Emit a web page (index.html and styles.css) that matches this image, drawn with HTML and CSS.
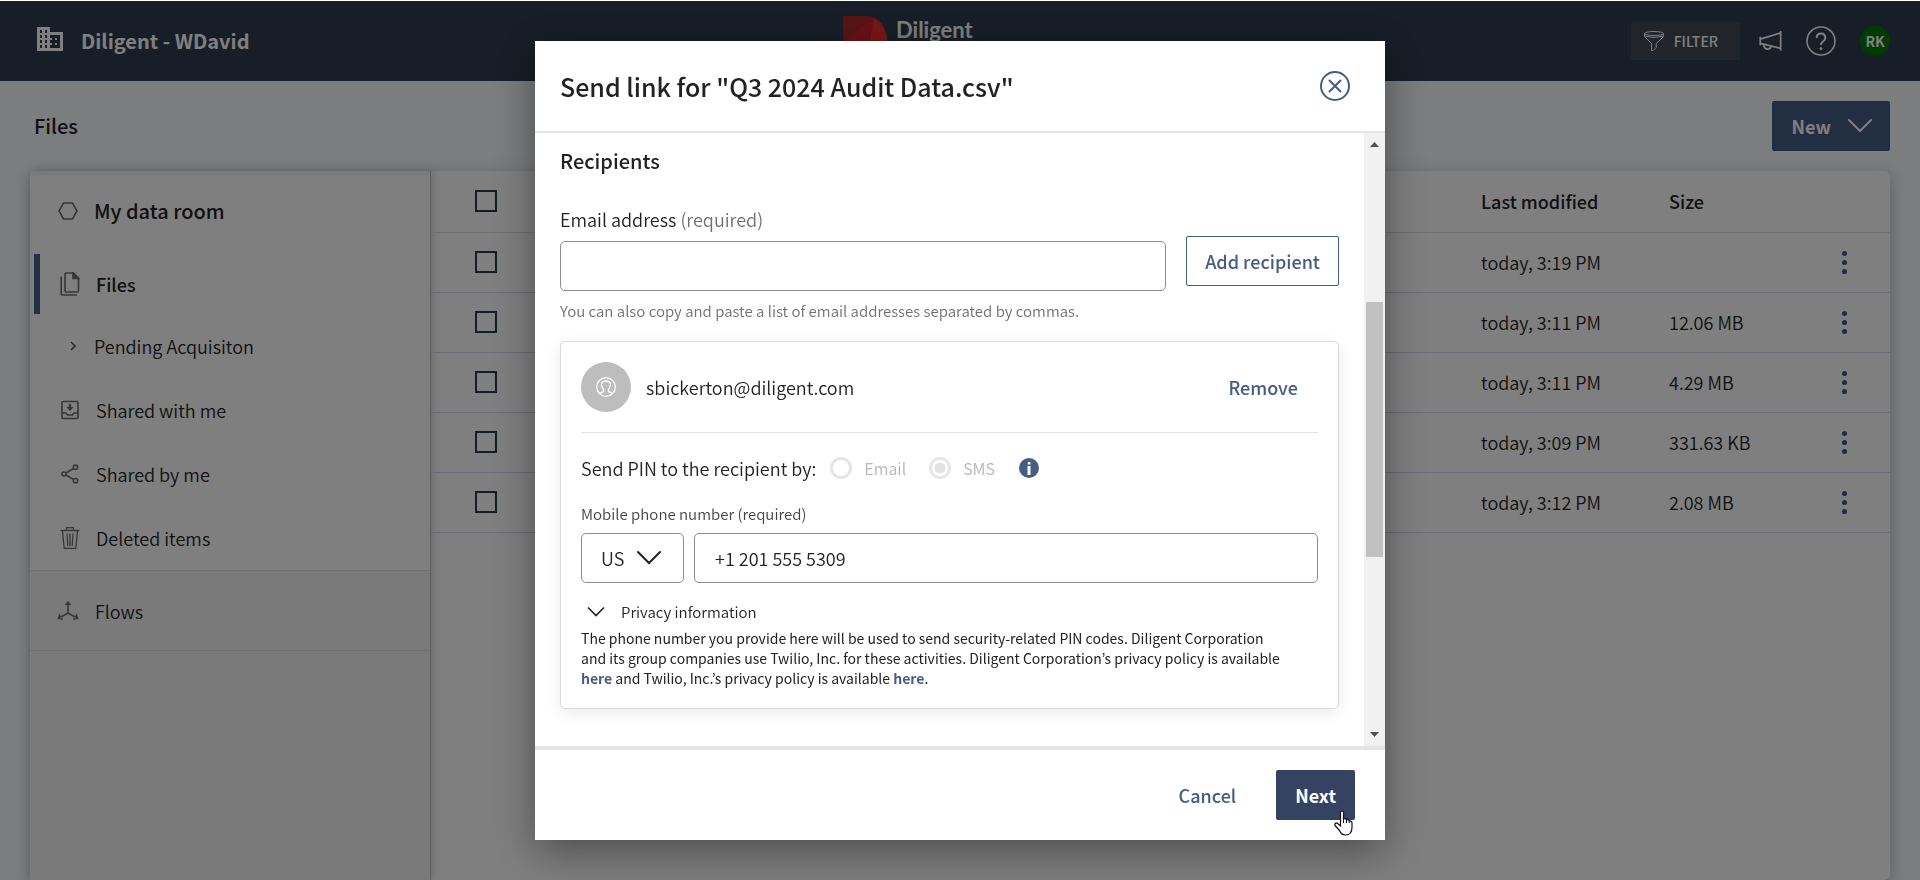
FILE: index.html
```html
<!DOCTYPE html>
<html lang="en">
<head>
    <meta charset="UTF-8">
    <meta name="viewport" content="width=device-width, initial-scale=1.0">
    <title>Files - Diligent</title>
    <link rel="stylesheet" href="styles.css">
</head>
<body>
    <header class="topbar">
        <div class="org">
            <svg class="org-icon" width="26" height="24" viewBox="0 0 26 24">
                <path fill="#fff" fill-rule="evenodd" d="M0 0h13v5h13v19H0zM3 3v3h2V3zM8 3v3h2V3zM3 8v3h2V8zM8 8v3h2V8zM3 13v3h2v-3zM8 13v3h2v-3zM3 18v3h2v-3zM8 18v3h2v-3zM13 8v3h2v2h-2v3h2v2h-2v3h10V8zM18 11h2v2h-2zM18 16h2v2h-2z"/>
            </svg>
            <span class="org-name">Diligent - WDavid</span>
        </div>
        <div class="brand">
            <svg width="44" height="50" viewBox="0 0 44 50">
                <path fill="#d3222a" d="M0 0h22c14 0 22 11 22 25S36 50 22 50H0z"/>
                <path fill="#af292e" d="M0 0h22q5 0 9 3L0 25z"/>
                <path fill="#ee312e" d="M31 3c8 4 13 12 13 22s-5 17-12 22l-5-22z"/>
            </svg>
            <span>Diligent</span>
        </div>
        <div class="tools">
            <button class="filter-btn" type="button">
                <svg width="20" height="20" viewBox="0 0 20 20" fill="none" stroke="#fff">
                    <ellipse cx="10" cy="2.5" rx="9.4" ry="2"/>
                    <path d="M.6 2.5v3.2l7 6.8v7l1.4.2 3.2-3.2v-4l7.2-6.8V2.5M.6 5q9.400 3 18.800 0"/>
                </svg>
                FILTER
            </button>
            <button class="icon-btn" type="button" aria-label="Announcements">
                <svg width="23" height="22" viewBox="0 0 24 22" fill="none" stroke="#fff" stroke-width="1.800">
                    <path d="M1.300 6.500v9M22.600.500v20.500M1.300 9L22.600 2.500M1.300 13.500l21.300 5.200M5 14.500q.500 5 4 5 3 0 3.500-3"/>
                </svg>
            </button>
            <button class="icon-btn" type="button" aria-label="Help">
                <svg width="30" height="30" viewBox="0 0 30 30" fill="none" stroke="#fff" stroke-width="1.600">
                    <circle cx="15" cy="15" r="14"/>
                    <path stroke-width="2" d="M10.700 12q0-4.500 4.300-4.500T19.300 12c0 3.500-4.300 3-4.300 7"/>
                    <circle cx="15" cy="22.500" r="1.500" fill="#fff" stroke="none"/>
                </svg>
            </button>
            <span class="user">RK</span>
        </div>
    </header>

    <main class="page">
        <div class="page-head">
            <h1>Files</h1>
            <button class="new-btn" type="button">
                New
                <svg width="26" height="16" viewBox="0 0 26 16" fill="none" stroke="#fff" stroke-width="2" stroke-linecap="round"><path d="M2 2l11 11L24 2"/></svg>
            </button>
        </div>

        <div class="panel">
            <nav class="sidebar">
                <a class="side-title" href="#">
                    <svg width="20" height="20" viewBox="0 0 20 20" fill="none" stroke="#6f6f6f" stroke-width="1.600"><path d="M5.500 2h9L19 10l-4.500 8h-9L1 10z"/></svg>
                    My data room
                </a>
                <a class="active" href="#">
                    <svg width="20" height="24" viewBox="0 0 20 24" fill="none" stroke="#6f6f6f" stroke-width="1.600"><path d="M5 2q0-1 1-1h7.500L18.500 6v13q0 1-1 1H6q-1 0-1-1zM1.200 4.500V22q0 1 1 1H17"/><path fill="#6f6f6f" d="M13 1v5.500h5.500z"/></svg>
                    Files
                </a>
                <a class="sub" href="#">
                    <svg width="20" height="12" viewBox="0 0 20 12" fill="none" stroke="#555" stroke-width="1.600"><path d="M13 2l4 4-4 4"/></svg>
                    Pending Acquisiton
                </a>
                <a href="#">
                    <svg width="20" height="20" viewBox="0 0 20 20" fill="none" stroke="#6f6f6f" stroke-width="1.600"><rect x="2" y="1.500" width="16" height="17" rx="1"/><path d="M2 13h4l1.500 2h5l1.500-2h4"/><path fill="#6f6f6f" stroke="none" d="M8.800 4h2.400v3h2.300L10 11 6.500 7h2.300z"/></svg>
                    Shared with me
                </a>
                <a href="#">
                    <svg width="20" height="20" viewBox="0 0 20 20" fill="none" stroke="#6f6f6f" stroke-width="1.600"><circle cx="4" cy="10" r="2"/><circle cx="15.500" cy="3.300" r="2.200"/><circle cx="15.500" cy="16.700" r="2.200"/><path d="M6 9l7.500-4.500M6 11l7.500 4.500"/></svg>
                    Shared by me
                </a>
                <a href="#">
                    <svg width="20" height="24" viewBox="0 0 20 24" fill="none" stroke="#6f6f6f" stroke-width="1.300"><path d="M.5 4.500h19M6.500 4V1.700h7V4M2.500 5l1.700 17.300h11.600L17.500 5M7 7.500l.8 12.500M10 7.500V20M13 7.500L12.200 20"/></svg>
                    Deleted items
                </a>
                <a class="flows" href="#">
                    <svg width="22" height="20" viewBox="0 0 22 20" fill="none" stroke="#6f6f6f" stroke-width="1.600"><path d="M11 2v10M11 12l-9 5M11 12l9 5M8.500 4L11 1.200 13.500 4M3 13.300L1.500 17.500l4.500.8M19 13.300l1.500 4.200-4.500.8"/></svg>
                    Flows
                </a>
            </nav>

            <table class="files">
                <thead>
                    <tr>
                        <th class="col-check"><input type="checkbox" aria-label="Select all"></th>
                        <th></th>
                        <th class="col-date">Last modified</th>
                        <th class="col-size">Size</th>
                        <th class="col-menu"></th>
                    </tr>
                </thead>
                <tbody>
                    <tr>
                        <td><input type="checkbox" aria-label="Select row 1"></td>
                        <td></td>
                        <td>today, 3:19 PM</td>
                        <td></td>
                        <td><button class="dots" type="button" aria-label="More"><i></i><i></i><i></i></button></td>
                    </tr>
                    <tr>
                        <td><input type="checkbox" aria-label="Select row 2"></td>
                        <td></td>
                        <td>today, 3:11 PM</td>
                        <td>12.06 MB</td>
                        <td><button class="dots" type="button" aria-label="More"><i></i><i></i><i></i></button></td>
                    </tr>
                    <tr>
                        <td><input type="checkbox" aria-label="Select row 3"></td>
                        <td></td>
                        <td>today, 3:11 PM</td>
                        <td>4.29 MB</td>
                        <td><button class="dots" type="button" aria-label="More"><i></i><i></i><i></i></button></td>
                    </tr>
                    <tr>
                        <td><input type="checkbox" aria-label="Select row 4"></td>
                        <td></td>
                        <td>today, 3:09 PM</td>
                        <td>331.63 KB</td>
                        <td><button class="dots" type="button" aria-label="More"><i></i><i></i><i></i></button></td>
                    </tr>
                    <tr>
                        <td><input type="checkbox" aria-label="Select row 5"></td>
                        <td></td>
                        <td>today, 3:12 PM</td>
                        <td>2.08 MB</td>
                        <td><button class="dots" type="button" aria-label="More"><i></i><i></i><i></i></button></td>
                    </tr>
                </tbody>
            </table>
        </div>
    </main>

    <div class="overlay">
        <div class="modal" role="dialog" aria-labelledby="modalTitle">
            <div class="modal-head">
                <h2 id="modalTitle">Send link for "Q3 2024 Audit Data.csv"</h2>
                <button class="close-btn" type="button" aria-label="Close">
                    <svg width="30" height="30" viewBox="0 0 30 30" fill="none" stroke="#455d82" stroke-width="2"><circle cx="15" cy="15" r="14"/><path stroke-linecap="round" d="M9.500 9.500l11 11M20.500 9.500l-11 11"/></svg>
                </button>
            </div>

            <div class="modal-main">
                <form class="modal-body">
                    <h3>Recipients</h3>
                    <label class="email-label" for="email">Email address <span>(required)</span></label>
                    <div class="email-row">
                        <input class="field" type="email" id="email">
                        <button class="add-btn" type="button">Add recipient</button>
                    </div>
                    <p class="hint">You can also copy and paste a list of email addresses separated by commas.</p>

                    <section class="card">
                        <div class="person">
                            <span class="avatar">
                                <svg width="20" height="20" viewBox="0 0 20 20" fill="none" stroke="#fff" stroke-width="1.300"><circle cx="10" cy="10" r="9.300"/><path d="M3.500 16.300l4-1.800v-2Q5.500 10 5.500 7.500 5.800 4 10 4t4.500 3.500q0 2.500-2 5v2l4 1.800"/></svg>
                            </span>
                            <span class="address">sbickerton@diligent.com</span>
                            <button class="link-btn" type="button">Remove</button>
                        </div>

                        <div class="pin">
                            <span>Send PIN to the recipient by:</span>
                            <label><input type="radio" name="pin" disabled>Email</label>
                            <label><input type="radio" name="pin" checked disabled>SMS</label>
                            <svg width="20" height="20" viewBox="0 0 20 20"><circle cx="10" cy="10" r="10" fill="#455d82"/><path fill="#fff" d="M8.800 4h2.600v2.500H8.800zM8.500 8h3v9h-3z"/></svg>
                        </div>

                        <label class="phone-label" for="phone">Mobile phone number (required)</label>
                        <div class="phone-row">
                            <div class="country">
                                <select aria-label="Country"><option>US</option></select>
                                <svg width="26" height="16" viewBox="0 0 26 16" fill="none" stroke="#222" stroke-width="2" stroke-linecap="round"><path d="M2 2l11 11L24 2"/></svg>
                            </div>
                            <input class="field" type="tel" id="phone" value="+1 201 555 5309">
                        </div>

                        <details class="privacy" open>
                            <summary>
                                <svg width="18" height="12" viewBox="0 0 18 12" fill="none" stroke="#222" stroke-width="1.600"><path d="M1 1.500l8 8 8-8"/></svg>
                                Privacy information
                            </summary>
                            <p>The phone number you provide here will be used to send security-related PIN codes. Diligent Corporation and its group companies use Twilio, Inc. for these activities. Diligent Corporation’s privacy policy is available <a href="#">here</a> and Twilio, Inc.’s privacy policy is available <a href="#">here</a>.</p>
                        </details>
                    </section>
                </form>

                <div class="scrollbar">
                    <svg width="9" height="5" viewBox="0 0 9 5"><path fill="#505050" d="M0 5l4.500-5L9 5z"/></svg>
                    <div class="track"><div class="thumb"></div></div>
                    <svg width="9" height="5" viewBox="0 0 9 5"><path fill="#505050" d="M0 0l4.500 5L9 0z"/></svg>
                </div>
            </div>

            <div class="modal-foot">
                <button class="link-btn" type="button">Cancel</button>
                <button class="next-btn" type="button">
                    Next
                    <svg class="pointer" width="20" height="26" viewBox="0 0 20 26"><path fill="#fff" stroke="#111" stroke-width="1.200" stroke-linejoin="round" d="M6.500 16V2.500Q6.700 1 8 1t1.500 1.500V9q2.500-1 3 .8 2.300-.6 2.700 1 2.600-.2 2.800 2V17c0 5-2.500 8-6.500 8-3.500 0-5-2-6-4.500L1 15.500q-.5-2 1-2.300 1.500-.2 2.500 1z"/><path stroke="#111" d="M9.500 9v4M12.500 10v3M15.200 11v2"/></svg>
                </button>
            </div>
        </div>
    </div>
</body>
</html>
```
FILE: styles.css
```css
* {
    box-sizing: border-box;
}

body {
    margin: 0;
    height: 100vh;
    display: flex;
    flex-direction: column;
    overflow: hidden;
    background-color: #f8fafd;
    color: #222;
    font-family: "Noto Sans CJK JP", "Noto Sans CJK SC", sans-serif;
    font-size: 18px;
    line-height: 24px;
    font-weight: 350;
}

button, input, select {
    font: inherit;
    color: inherit;
}

button {
    border: none;
    padding: 0;
    background: none;
    cursor: pointer;
}

h1, h2, h3, p {
    margin: 0;
    font-weight: 500;
}

svg {
    flex-shrink: 0;
    display: block;
}

a {
    color: inherit;
    text-decoration: none;
}

/* Top bar */
.topbar {
    position: relative;
    height: 81px;
    flex-shrink: 0;
    display: flex;
    justify-content: space-between;
    align-items: center;
    padding: 0 30px 0 37px;
    border-top: 1px solid #fff;
    background-color: #2e3c4e;
    color: #fff;
}

.org {
    display: flex;
    align-items: center;
    gap: 18px;
}

.org-icon {
    margin-bottom: 4px;
}

.org-name {
    font-size: 20px;
    font-weight: 700;
}

.brand {
    position: absolute;
    left: 50%;
    top: 15px;
    margin-left: -117px;
    display: flex;
    gap: 9px;
    font-family: Lato, sans-serif;
    font-size: 22px;
    line-height: 28px;
    font-weight: 700;
}

.tools {
    display: flex;
    align-items: center;
    gap: 24px;
}

.filter-btn {
    display: flex;
    align-items: center;
    gap: 10px;
    height: 38px;
    padding: 0 22px 0 13px;
    margin-right: -5px;
    border-radius: 2px;
    background-color: #434856;
    font-size: 14px;
    font-weight: 500;
}

.user {
    width: 30px;
    height: 30px;
    border-radius: 50%;
    background-color: #007800;
    font-size: 14px;
    line-height: 30px;
    font-weight: 700;
    text-align: center;
}

/* Page */
.page {
    flex: 1;
    display: flex;
    flex-direction: column;
    padding: 20px 30px 0;
}

.page-head {
    display: flex;
    justify-content: space-between;
    align-items: center;
    padding-left: 4px;
    margin-bottom: 20px;
}

.page-head h1 {
    font-size: 20px;
}

.new-btn {
    display: flex;
    align-items: center;
    gap: 16px;
    height: 50px;
    padding: 0 17px 0 20px;
    border-radius: 2px;
    background-color: #455d85;
    color: #fff;
    font-weight: 700;
}

.panel {
    flex: 1;
    display: flex;
    border-radius: 6px;
    background-color: #fff;
    box-shadow: 0 4px 16px rgba(0, 0, 0, 0.25);
}

.sidebar {
    flex: 0 0 401px;
    padding-top: 4px;
    border-right: 1px solid #bbb;
    background-color: #f5f5f5;
    box-shadow: 2px 0 8px rgba(0, 0, 0, 0.15);
}

.sidebar a {
    display: flex;
    align-items: center;
    gap: 16px;
    height: 64px;
    padding-left: 30px;
    background-color: #fff;
}

.sidebar .side-title {
    height: 79px;
    padding: 0 0 8px 28px;
    font-size: 20px;
    font-weight: 500;
}

.sidebar .active {
    height: 60px;
    padding-left: 20px;
    margin-left: 4px;
    border-left: 6px solid #455d85;
    box-shadow: -4px 0 #fff;
    font-weight: 500;
}

.sidebar .sub {
    padding-left: 28px;
}

.sidebar .flows {
    height: 81px;
    padding-left: 27px;
    border-top: 1px solid #e0e0e0;
    border-bottom: 1px solid #e0e0e0;
    background-color: #f5f5f5;
}

/* File table */
.files {
    flex: 1;
    align-self: flex-start;
    table-layout: fixed;
    border-collapse: collapse;
    text-align: left;
}

.files th, .files td {
    height: 60px;
    padding: 0;
    border-bottom: 1px solid #d3daea;
}

.files th {
    height: 61px;
    font-weight: 500;
    border-bottom-color: #dde0e6;
}

.files .col-check {
    width: 90px;
}

.files .col-date {
    width: 188px;
}

.files .col-size {
    width: 156px;
}

.files .col-menu {
    width: 65px;
}

.files input {
    display: block;
    appearance: none;
    width: 22px;
    height: 22px;
    margin: 0 0 0 44px;
    border: 2px solid #2a3850;
}

.dots {
    display: flex;
    flex-direction: column;
    gap: 4px;
    padding: 0 17px;
}

.dots i {
    width: 5px;
    height: 5px;
    border-radius: 50%;
    background-color: #3f5785;
}

/* Modal */
.overlay {
    position: fixed;
    inset: 1px 0 0;
    display: flex;
    justify-content: center;
    padding: 40px;
    background-color: rgba(0, 0, 0, 0.5);
}

.modal {
    width: 850px;
    display: flex;
    flex-direction: column;
    background-color: #fff;
    box-shadow: 0 12px 40px rgba(0, 0, 0, 0.4);
}

.modal-head {
    display: flex;
    justify-content: space-between;
    align-items: center;
    height: 92px;
    padding: 0 35px 0 25px;
    border-bottom: 2px solid #e5e5e5;
}

.modal-head h2 {
    font-size: 25px;
    line-height: 32px;
}

.modal-main {
    flex: 1;
    min-height: 0;
    display: flex;
}

.modal-body {
    flex: 1;
    overflow: hidden;
    padding: 16px 25px 0;
}

.modal-body h3 {
    font-size: 20px;
}

.email-label {
    display: block;
    margin-top: 34px;
}

.email-label span, .hint {
    color: #707070;
}

.email-row {
    display: flex;
    align-items: flex-end;
    gap: 20px;
    margin-top: 5px;
}

.field {
    flex: 1;
    min-width: 0;
    height: 50px;
    padding: 0 20px;
    border: 1px solid #8c8c8c;
    border-radius: 5px;
    background-color: #fff;
}

.add-btn {
    height: 50px;
    margin-bottom: 5px;
    padding: 0 18px;
    border: 1px solid #455d82;
    border-radius: 2px;
    color: #455d82;
    font-weight: 500;
}

.hint {
    margin-top: 8px;
    font-size: 15px;
    font-weight: 350;
}

.card {
    margin-top: 18px;
    padding: 20px;
    border: 1px solid #dadada;
    border-radius: 5px;
    box-shadow: 0 4px 16px rgba(0, 0, 0, 0.08);
}

.person {
    display: flex;
    align-items: center;
    padding-bottom: 20px;
    border-bottom: 1px solid #e2e2e2;
}

.avatar {
    display: grid;
    place-items: center;
    width: 50px;
    height: 50px;
    margin-right: 15px;
    border-radius: 50%;
    background-color: #bdbdbd;
}

.link-btn {
    padding: 0 20px;
    color: #455d82;
    font-weight: 500;
}

.person .link-btn {
    margin-left: auto;
}

.pin {
    display: flex;
    align-items: center;
    margin-top: 23px;
}

.pin label {
    display: flex;
    align-items: center;
    gap: 12px;
    color: #b5b5b5;
    font-size: 16px;
}

.pin label:first-of-type {
    margin: 0 23px 0 14px;
}

.pin svg {
    margin-left: 24px;
}

.pin input {
    appearance: none;
    width: 22px;
    height: 22px;
    margin: 0;
    border: 3px solid #e5e5e5;
    border-radius: 50%;
}

.pin input:checked {
    background: radial-gradient(circle, #e2e2e2 5px, #fff 6px);
}

.phone-label {
    display: block;
    margin-top: 22px;
    color: #444;
    font-size: 15px;
}

.phone-row {
    display: flex;
    gap: 10px;
    margin-top: 7px;
}

.country {
    position: relative;
    width: 103px;
}

.country select {
    appearance: none;
    width: 100%;
    height: 50px;
    padding: 0 19px;
    border: 1px solid #8c8c8c;
    border-radius: 5px;
    background-color: #fff;
}

.country svg {
    position: absolute;
    right: 22px;
    top: 17px;
    pointer-events: none;
}

.privacy {
    margin-top: 17px;
    font-size: 15px;
}

.privacy summary {
    display: flex;
    align-items: center;
    gap: 16px;
    padding-left: 6px;
    list-style: none;
}

.privacy p {
    max-width: 710px;
    margin-top: 4px;
    font-size: 14px;
    line-height: 20px;
    font-weight: 400;
}

.privacy a {
    color: #455d82;
    font-weight: 700;
}

.scrollbar {
    display: flex;
    flex-direction: column;
    align-items: center;
    width: 21px;
    padding: 9px 2px;
    background-color: #f1f1f1;
}

.track {
    flex: 1;
    width: 17px;
    margin: 7px 0;
    padding-top: 148px;
}

.thumb {
    height: 255px;
    background-color: #c1c1c1;
}

.modal-foot {
    display: flex;
    justify-content: flex-end;
    align-items: center;
    gap: 20px;
    height: 94px;
    padding: 0 30px;
    border-top: 4px solid #e5e5e5;
}

.next-btn {
    position: relative;
    height: 50px;
    padding: 0 19px;
    border-radius: 2px;
    background-color: #364261;
    color: #fff;
    font-weight: 700;
}

.pointer {
    position: absolute;
    right: 1px;
    bottom: -16px;
}
```
